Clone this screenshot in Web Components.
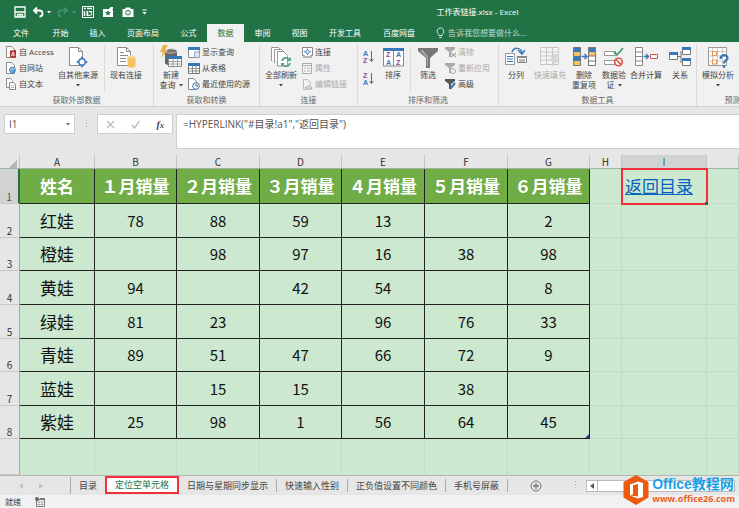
<!DOCTYPE html>
<html lang="zh-CN">
<head>
<meta charset="utf-8">
<title>工作表链接.xlsx - Excel</title>
<style>
html,body{height:100%;margin:0}
body{font:8px/10px "Open Sans","Noto Sans CJK SC",sans-serif;color:#444;overflow:hidden}
</style>
</head>
<body>
<excel-window></excel-window>
<script>
const ICONS = {
save:[12,12,'<path d="M1 1h10v10H1z" fill="none" stroke="#fff" stroke-width="1.3"/><path d="M1 6h10M3.5 11V8.500h5V11" fill="none" stroke="#fff" stroke-width="1.300"/><path d="M5 9h1.500v2H5z" fill="#fff"/>'],
undo:[12,12,'<path d="M2 4.500h5.500c4 0 4 6 0 6M5 1.500 2 4.500l3 3" fill="none" stroke="#fff" stroke-width="1.800"/>'],
redo:[12,12,'<path d="M10 4.500H4.500c-4 0-4 6 0 6M7 1.500l3 3-3 3" fill="none" stroke="#4b946d" stroke-width="1.600"/>'],
caret:[4,3,'<path d="M0 0h4L2 2.500z" fill="currentColor"/>'],
pivot:[12,12,'<path d="M.5.5h11v11H.5z" fill="none" stroke="#fff"/><path d="M2 2.500h2M5 2.500h5M2.500 5v5" stroke="#fff" stroke-width="1.500"/><path d="M4.500 5H10v5H4.500z" fill="#fff"/><path d="m6 5 4 2.500-1.500.5L10 10l-1 .5-1-2-1.500 1z" fill="#217346"/>'],
star:[12,12,'<path d="M1 3h6l1.500-2H11v2h-1l1 1v7H1z" fill="#fff"/><path d="m6 4 .9 1.900 2.100.2-1.600 1.400.5 2.100L6 8.500 4.100 9.600l.5-2.100L3 6.100l2.100-.2z" fill="#217346"/>'],
camera:[12,12,'<path d="M.5 3H3l1-1.500h4L9 3h2.500v8H.5z" fill="#fff"/><circle cx="6" cy="6.700" r="2.300" fill="none" stroke="#217346"/>'],
custom:[5,6,'<path d="M.5 1h4" stroke="#fff"/><path d="M.3 3h4.400L2.500 5.500z" fill="#fff"/>'],
bulb:[9,12,'<path d="M3 8.500C3 7 1.200 6.500 1.200 4.200 1.200 2.200 2.700 1 4.500 1s3.300 1.200 3.300 3.200C7.800 6.500 6 7 6 8.500zM3.200 10.500h2.600" fill="none" stroke="#dbeae2"/>'],
access:[10,12,'<path d="M.5.5h5l3 3v8h-8z" fill="#fff" stroke="#888"/><path d="M4 4.500 10 4v8l-6-.5z" fill="#b5353d"/><path d="M5.500 10 7 6l1.500 4M6 9h2" fill="none" stroke="#fff" stroke-width=".8"/>'],
web:[10,12,'<path d="M.5.5h5l3 3v8h-8z" fill="#fff" stroke="#888"/><circle cx="6.500" cy="8" r="3" fill="#5d9bcf" stroke="#3d78ad" stroke-width=".7"/><path d="M4 8c2-2 3-2 5-1M5 10l3-4" stroke="#d5e9f5" stroke-width=".6" fill="none"/>'],
text:[10,12,'<path d="M3 9.500H.5v-9h4l2 2v1" fill="#fff" stroke="#888"/><path d="M3.500 4.500h4l2 2v5h-6z" fill="#fff" stroke="#888"/><path d="M5 8h3M5 9.500h3" stroke="#999" stroke-width=".6"/>'],
other:[20,22,'<path d="M1.500 1.500h9l4 4v14h-13z" fill="#fff" stroke="#8c8c8c"/><path d="M10.500 1.500v4h4" fill="none" stroke="#8c8c8c"/><circle cx="14" cy="16" r="3.200" fill="#fff" stroke="#3877b9" stroke-width="1.400"/><path d="m14 10 1.500 2.500h-3zM14 22l1.500-2.500h-3zM8 16l2.500-1.500v3zM20 16l-2.500-1.500v3z" fill="#3877b9"/>'],
existing:[20,22,'<path d="M1.500 1.500h9l4 4v14h-13z" fill="#fff" stroke="#8c8c8c"/><path d="M10.500 1.500v4h4M4 6.500h4M4 9.500h8M4 12.500h6M4 15.500h6" fill="none" stroke="#8c8c8c"/><path d="M11.500 11v9c0 2 8 2 8 0v-9" fill="#f3c261"/><ellipse cx="15.500" cy="11" rx="4" ry="1.500" fill="#f8d896"/>'],
query:[24,24,'<path d="M6 6v12c0 3 12 3 12 0V6" fill="#666"/><ellipse cx="12" cy="6" rx="6" ry="2.200" fill="#777" stroke="#ddd" stroke-width=".7"/><path d="M4 0h5L6 5h3L2 13l2-6H1z" fill="#efb04c"/><path d="M9.500 11.500h13v10h-13z" fill="#fff" stroke="#888"/><path d="M9 11h14v3H9z" fill="#3877b9"/><path d="M9.500 16.500h13M9.500 19h13M14 14v7.500M18.500 14v7.500" stroke="#888" stroke-width=".8"/>'],
show:[12,11,'<path d="M.5.5h11v10H.5z" fill="#fff" stroke="#888"/><path d="M0 0h12v3H0z" fill="#3877b9"/><path d="M6.500 5h5v5.500h-5z" fill="#dce7f3" stroke="#8aa6c5"/>'],
grid:[12,11,'<path d="M.5.5h11v10H.5z" fill="#fff" stroke="#777"/><path d="M0 0h12v3H0z" fill="#3877b9"/><path d="M.5 5.500h11M.5 8h11M4.500 3v7.500M8 3v7.500" stroke="#777" stroke-width=".8"/>'],
recent:[12,12,'<path d="M.5.5h5l3 3v8h-8z" fill="#fff" stroke="#888"/><circle cx="8" cy="8" r="3.300" fill="#fff" stroke="#3877b9"/><path d="M8 6v2h2" fill="none" stroke="#555"/>'],
refresh:[22,22,'<path d="M1.500 15V1.500h7l3 3" fill="#fff" stroke="#999"/><path d="M4.500 17V3.500h7l3 3" fill="#fff" stroke="#999"/><path d="M7.500 5.500h6l4 4V20h-10z" fill="#fff" stroke="#999"/><path d="M12 15c1-4 6-4 8-1M20 17c-1 4-6 4-8 1" fill="none" stroke="#5da585" stroke-width="1.800"/><path d="M21 11v4h-4zM11 21v-4h4z" fill="#5da585"/>'],
link:[11,11,'<path d="M2.500 8.500h-2v-8h10v8h-2" fill="#fff" stroke="#888"/><circle cx="5.500" cy="4.800" r="1.700" fill="none" stroke="#3877b9"/><path d="M5.500 1.500v1M5.500 7v1M2 4.800h1M8 4.800h1" stroke="#3877b9"/><path d="M1 10h9" stroke="#777"/>'],
props:[11,11,'<path d="M.5.5h9v10h-9z" fill="#f8f8f8" stroke="#aaa"/><path d="M.5 2.500h9M2 5h2M5 5h3M2 8h2M5 8h3" stroke="#aaa"/>'],
edit:[11,11,'<path d="M1.500 10V.5h4l3 3V6M1.500 10.500H4" fill="none" stroke="#bbb"/><path d="M4 10c0-4 6-4 6 0zM3 8l2 2" fill="#ddd" stroke="#aaa"/>'],
az:[11,13,'<text x="0" y="6" font-size="7" font-weight="600" fill="#3877b9">A</text><text x="0" y="12.500" font-size="7" font-weight="600" fill="#8a4ba2">Z</text><path d="M8.500 1v10M6.500 9l2 2.500 2-2.500" fill="none" stroke="#666"/>'],
za:[11,13,'<text x="0" y="6" font-size="7" font-weight="600" fill="#8a4ba2">Z</text><text x="0" y="12.500" font-size="7" font-weight="600" fill="#3877b9">A</text><path d="M8.500 1v10M6.500 9l2 2.500 2-2.500" fill="none" stroke="#666"/>'],
sort:[21,19,'<path d="M.5.500h20v17.500H.5z" fill="#fff" stroke="#888"/><path d="M0 0h21v3H0z" fill="#3877b9"/><path d="M10.500 3v15" stroke="#888"/><g font-size="7" font-weight="600"><text x="3" y="9" fill="#8a4ba2">Z</text><text x="3" y="17" fill="#3877b9">A</text><text x="13" y="9" fill="#3877b9">A</text><text x="13" y="17" fill="#8a4ba2">Z</text></g>'],
filter:[20,21,'<path d="M0 1h20v3l-8 7v10H8V11L0 4z" fill="#777"/><path d="M2 3h3l5 7v9H9v-8z" fill="#aaa"/>'],
clear:[11,11,'<path d="M0 0h10v2L6 5v5H4V5L0 2z" fill="#aaa"/><path d="m6 6 5 4M11 6l-5 4" stroke="#aaa" stroke-width="1.300"/>'],
reapply:[11,11,'<path d="M0 0h10v2L6 5v5H4V5L0 2z" fill="#aaa"/><circle cx="8" cy="8" r="2.500" fill="#f1f1f1" stroke="#aaa"/>'],
advanced:[11,11,'<path d="M0 0h10v2L6 5v5H4V5L0 2z" fill="#555"/><path d="m5.500 9.500 4.500-5.500" stroke="#3877b9" stroke-width="2"/>'],
split:[22,20,'<path d="M.5 6.500h9v11h-9z" fill="#fff" stroke="#999"/><path d="M2 9.500h6M2 12h6M2 14.500h6" stroke="#3877b9"/><path d="M12.500 9.500h9v6h-9z" fill="#fff" stroke="#888"/><path d="M12 9h10v2H12z" fill="#888"/><path d="M14 12h6v3h-6z" fill="#bbb"/><path d="M7 5c2-5 9-5 10 1M13 3l4 4 3-4" fill="none" stroke="#3877b9" stroke-width="1.500"/>'],
flash:[21,20,'<path d="M.5.5h18v17H.5z" fill="#f4f4f4" stroke="#c7c7c7"/><path d="M.5 5h18M.5 9h18M.5 13h18M6.500.5v17M12.500.5v17" stroke="#c7c7c7"/><path d="M13 7h7l-4 5h4l-8 8 2-6h-4z" fill="#d5d5d5"/>'],
dup:[23,20,'<path d="M.5.5h7v18h-7z" fill="#3877b9" stroke="#777"/><path d="M1 5h6v4H1zM1 14h6v4H1z" fill="#f3c261"/><path d="M15.500.5h7v18h-7z" fill="#fff" stroke="#777"/><path d="M16 1h6v4h-6z" fill="#3877b9"/><path d="M16 5h6v4h-6z" fill="#f3c261"/><path d="M15.500 9h7M15.500 14h7" stroke="#777"/><path d="M8.500 9.500h5M11.500 7l2.500 2.500-2.500 2.500" fill="none" stroke="#3877b9" stroke-width="1.400"/>'],
valid:[20,20,'<path d="M.5 4.500h11v4H.5zM.5 13.500h11v4H.5z" fill="#fff" stroke="#999"/><path d="m10 5 3 3 6-7" fill="none" stroke="#459a70" stroke-width="1.800"/><circle cx="14.500" cy="15" r="3.800" fill="#fff" stroke="#d95245" stroke-width="1.600"/><path d="m12 12.500 5 5" stroke="#d95245" stroke-width="1.600"/>'],
merge:[23,20,'<path d="M.5.500h7v18h-7zM.5 5h7M.5 9.500h7M.5 14h7" fill="#fff" stroke="#888"/><path d="M8.500 9.500h5M11 7l2.500 2.500L11 12" fill="none" stroke="#3877b9" stroke-width="1.400"/><path d="M15.500 7.500h7v4h-7z" fill="#fff" stroke="#d95245"/>'],
relation:[22,20,'<path d="M9 9.500h3V4M9 9.500h3V16" fill="none" stroke="#777"/><path d="M.5 5.500h8v7h-8zM13.500.5h8v7h-8zM13.500 11.500h8v7h-8z" fill="#fff" stroke="#777"/><path d="M0 5h9v3H0zM13 0h9v3h-9zM13 11h9v3h-9z" fill="#3877b9"/>'],
whatif:[21,21,'<path d="M.5.500h18v18H.5z" fill="#fff" stroke="#999"/><path d="M.5 4.500h18M.5 9h18M.5 14h18M4.500.5v18M9.500.5v18M14.500.5v18" stroke="#bbb" stroke-width=".8"/><path d="M4.500 4.500h4v4h-4zM4.500 13h4v4h-4z" fill="#fff" stroke="#e99052"/><path d="M12.500 12c0-5 7-5 7-1 0 3-3.500 2-3.500 5.500" fill="none" stroke="#3877b9" stroke-width="2.200"/><circle cx="16" cy="19.500" r="1.400" fill="#3877b9"/>'],
cross:[9,9,'<path d="m1 1 7 7M8 1 1 8" stroke="#bbb" stroke-width="1.200"/>'],
check:[9,9,'<path d="m1 5 2.500 3L8.500 1" fill="none" stroke="#bbb" stroke-width="1.500"/>'],
dots:[3,9,'<path d="M1.500 0v9" stroke="#aaa" stroke-dasharray="1 2"/>'],
prev:[4,6,'<path d="M4 0v6L0 3z" fill="currentColor"/>'],
next:[4,6,'<path d="M0 0v6l4-3z" fill="currentColor"/>'],
plus:[12,12,'<circle cx="6" cy="6" r="5" fill="none" stroke="#777"/><path d="M3 6h6M6 3v6" stroke="#777" stroke-width="1.300"/>'],
macro:[10,10,'<path d="M1.500 2.500h8v7h-8z" fill="#fff" stroke="#777"/><path d="M1 5h9M1 7.500h9M4 3v7M7 3v7" stroke="#999" stroke-width=".7"/><path d="M5 1h5v2H5z" fill="#777"/><circle cx="2" cy="2" r="2" fill="#666"/>'],
corner:[8,8,'<path d="M8 0v8H0z" fill="#b4b4b4"/>'],
office:[26,30,'<path d="M13 0 25.500 7v15.500L13 30 .5 22.500V7z" fill="#eb5a0d"/><path d="m7 9.500 8-3 5 1.500v14l-5 1.500-8-3 8 1V9l-5 1.200v9L7 20.500z" fill="#fff"/>']
};
const define = (name, html, setup) => {
  const template = document.createElement('template');
  template.innerHTML = html;
  customElements.define(name, class extends HTMLElement {
    constructor(){ super(); this.attachShadow({mode:'open'}).append(template.content.cloneNode(true)); }
    connectedCallback(){ if (setup) setup(this, this.shadowRoot); }
  });
};
define('x-icon','<style>:host{display:inline-flex;flex:none}svg{display:block;font-family:"Liberation Sans",sans-serif}</style><svg aria-hidden="true"></svg>',(host,root)=>{
  const [w,h,body]=ICONS[host.getAttribute('name')], svg=root.querySelector('svg');
  svg.setAttribute('width',w);svg.setAttribute('height',h);svg.setAttribute('viewBox',`0 0 ${w} ${h}`);svg.innerHTML=body;
});
define('title-bar',`<style>
:host{display:grid;grid-template-columns:1fr auto 1fr;align-items:center;height:24px;background:#217346;color:#fff}
nav{display:flex;align-items:center;gap:6px;padding-left:14px}
button{border:0;background:none;padding:0;color:inherit;display:flex;align-items:center;gap:3px}
.extra{margin-left:2px}
.dim{color:#4b946d}h1{font:inherit;margin:0;padding-left:216px}
</style><nav aria-label="快速访问">
<button aria-label="保存"><x-icon name="save"></x-icon></button>
<button aria-label="撤销"><x-icon name="undo"></x-icon><x-icon name="caret"></x-icon></button>
<button aria-label="恢复" class="dim"><x-icon name="redo"></x-icon><x-icon name="caret"></x-icon></button>
<button aria-label="选择"><x-icon name="pivot"></x-icon></button>
<button class="extra" aria-label="收藏"><x-icon name="star"></x-icon></button>
<button class="extra" aria-label="照相机"><x-icon name="camera"></x-icon></button>
<button class="extra" aria-label="自定义"><x-icon name="custom"></x-icon></button>
</nav><h1>工作表链接.xlsx - Excel</h1><span></span>`);
define('ribbon-tabs',`<style>
:host{display:flex;height:18px;background:#217346;color:#fff}
button{border:0;background:none;color:inherit;font:inherit;padding:0;width:37px;flex:none}
.file{width:42px}.wide{width:54px}
[aria-selected=true]{background:#f1f1f1;color:#217346}
label{display:flex;align-items:center;gap:3px;padding-left:10px;flex:1}
input{border:0;background:none;font:inherit;color:inherit;padding:0;outline:0;width:100px}
input::placeholder{color:#c5dccf;opacity:1}
</style><button class="file">文件</button><button>开始</button><button>插入</button><button class="wide">页面布局</button><button>公式</button><button role="tab" aria-selected="true">数据</button><button>审阅</button><button>视图</button><button class="wide">开发工具</button><button class="wide">百度网盘</button>
<label><x-icon name="bulb"></x-icon><input aria-label="告诉我" placeholder="告诉我您想要做什么..."></label>`);
define('ribbon-group',`<style>
:host{display:flex;flex-direction:column;flex:none;box-sizing:border-box;border-right:1px solid #dadada;height:62px}
.body{display:flex;height:51px}h2{font:inherit;color:#666;margin:0;text-align:center}
</style><div class="body"><slot></slot></div><h2></h2>`,(h,r)=>r.querySelector('h2').textContent=h.getAttribute('label'));
define('big-button',`<style>
:host{display:block;flex:none}
button{border:0;background:none;font:inherit;color:inherit;padding:0;width:100%;display:flex;flex-direction:column;align-items:center;white-space:nowrap}
.pic{height:26px;display:flex;align-items:center}
.line{height:10px;display:flex;align-items:center;gap:3px}:host([disabled]){color:#aaa}
</style><button><span class="pic"></span><slot></slot></button>`,(h,r)=>{
  r.querySelector('.pic').innerHTML=`<x-icon name="${h.getAttribute('icon')}"></x-icon>`;
  const b=r.querySelector('button');b.disabled=h.hasAttribute('disabled');
  const second=h.getAttribute('second')||'', menu=h.hasAttribute('menu')?'<x-icon name="caret"></x-icon>':'';
  if(second||menu)b.insertAdjacentHTML('beforeend',`<span class="line">${second}${menu}</span>`);
});
define('small-button',`<style>
:host{display:block;height:16px}button{border:0;background:none;font:inherit;color:inherit;padding:0;display:flex;align-items:center;gap:2px;height:16px;white-space:nowrap}
.pic{display:flex;min-width:11px}:host([disabled]){color:#aaa}
</style><button><span class="pic"></span><slot></slot></button>`,(h,r)=>{
  r.querySelector('.pic').innerHTML=`<x-icon name="${h.getAttribute('icon')}"></x-icon>`;
  r.querySelector('button').disabled=h.hasAttribute('disabled');
});
define('data-ribbon',`<style>
:host{display:flex;height:65px;padding-top:2px;box-sizing:border-box;background:#f1f1f1;border-bottom:1px solid #d2d2d2;overflow:hidden}
hr{width:1px;border:0;background:#dadada;margin:2px 0;height:45px;flex:none}
.list{flex:none}.first{padding-left:6px;width:52px;box-sizing:border-box}
.g1{width:154px}.g2{width:106px}.g3{width:98px}.g4{width:141px}.g5{width:198px}.g6{width:72px}
.w26{width:26px}.w30{width:30px}.w34{width:34px}.w38{width:38px}.w42{width:42px}.w52{width:52px}
.order{display:flex;flex-direction:column;gap:9px;padding:6px 2px 0 5px}
.order button{border:0;padding:0;background:none;display:flex}
</style>
<ribbon-group class="g1" label="获取外部数据"><div class="list first"><small-button icon="access">自 Access</small-button><small-button icon="web">自网站</small-button><small-button icon="text">自文本</small-button></div><big-button class="w52" icon="other" menu>自其他来源</big-button><hr><big-button class="w42" icon="existing">现有连接</big-button></ribbon-group>
<ribbon-group class="g2" label="获取和转换"><big-button class="w34" icon="query" second="查询" menu>新建</big-button><div class="list"><small-button icon="show">显示查询</small-button><small-button icon="grid">从表格</small-button><small-button icon="recent">最近使用的源</small-button></div></ribbon-group>
<ribbon-group class="g3" label="连接"><big-button class="w42" icon="refresh" menu>全部刷新</big-button><div class="list"><small-button icon="link">连接</small-button><small-button icon="props" disabled>属性</small-button><small-button icon="edit" disabled>编辑链接</small-button></div></ribbon-group>
<ribbon-group class="g4" label="排序和筛选"><div class="order"><button aria-label="升序"><x-icon name="az"></x-icon></button><button aria-label="降序"><x-icon name="za"></x-icon></button></div><big-button class="w34" icon="sort">排序</big-button><hr><big-button class="w34" icon="filter">筛选</big-button><div class="list"><small-button icon="clear" disabled>清除</small-button><small-button icon="reapply" disabled>重新应用</small-button><small-button icon="advanced">高级</small-button></div></ribbon-group>
<ribbon-group class="g5" label="数据工具"><big-button class="w34" icon="split">分列</big-button><big-button class="w34" icon="flash" disabled>快速填充</big-button><big-button class="w34" icon="dup" second="重复项">删除</big-button><big-button class="w26" icon="valid" second="证" menu>数据验</big-button><big-button class="w38" icon="merge">合并计算</big-button><big-button class="w30" icon="relation">关系</big-button></ribbon-group>
<ribbon-group class="g6" label="预测"><big-button class="w42" icon="whatif" menu>模拟分析</big-button></ribbon-group>`);
define('formula-bar',`<style>
:host{display:flex;align-items:flex-start;height:48px;box-sizing:border-box;padding:7px 0 6px 4px;background:#e6e6e6}
.box{display:flex;align-items:center;background:#fff;border:1px solid #d0d0d0;height:20px;box-sizing:border-box}
.name{width:71px;padding:0 4px}.tools{width:76px;justify-content:space-around}
.gap{width:22px;height:20px;display:flex;align-items:center;justify-content:center}
input,textarea{border:0;outline:0;background:none;font-family:inherit;color:#555;padding:0;font-size:10px;line-height:14px;min-width:0}
input{flex:1}.formula{flex:1;height:35px;align-items:flex-start;margin-left:3px;padding:2px 6px;border-right:0}
textarea{resize:none;overflow:hidden;width:100%;height:28px}
button{border:0;background:none;padding:0;display:flex;color:#666}
i{font:italic bold 10px "Liberation Serif",serif;color:#444}sub{font-size:8px;vertical-align:baseline}
</style><div class="box name"><input aria-label="名称框" value="I1"><button aria-label="名称列表"><x-icon name="caret"></x-icon></button></div><span class="gap"><x-icon name="dots"></x-icon></span>
<div class="box tools"><button aria-label="取消"><x-icon name="cross"></x-icon></button><button aria-label="输入"><x-icon name="check"></x-icon></button><button aria-label="插入函数"><i>f<sub>x</sub></i></button></div>
<div class="box formula"><textarea aria-label="编辑栏">=HYPERLINK("#目录!a1","返回目录")</textarea></div>`);
define('sheet-grid',`<style>
:host{display:block;flex:1;min-height:0;overflow:hidden;background:#cce8cf}
table{table-layout:fixed;border-collapse:separate;border-spacing:0;width:100%;height:100%;font-family:"Noto Sans CJK SC",sans-serif;color:#111}
th,td{padding:0;box-sizing:border-box;border-right:1px solid #c5d8cf;border-bottom:1px solid #c5d8cf;text-align:center;font-weight:400}
thead th{height:14px;background:#e6e6e6;border-color:#c4c4c4;border-bottom-color:#9fb5a5;font-size:10px;line-height:12px;color:#333}
thead th.on,tbody th.on{background:#d2d2d2;color:#217346}thead th:first-child{text-align:right;padding-right:2px}thead x-icon{vertical-align:bottom}
tbody th{background:#e6e6e6;border-color:#c8c8c8;border-right-color:#9eaaa1;vertical-align:bottom;font-size:10px;line-height:13px;color:#333}
tbody th.on{border-right:2px solid #217346}
td.d{font-size:15px;line-height:20px;border-color:#222}td.n{font-size:17px}
td.h{font-size:17px;line-height:20px;font-weight:700;color:#fff;background:#70ad47}
td.last{position:relative}td.last::after{content:"";position:absolute;right:0;bottom:0;border:2px solid;border-color:transparent #27408b #27408b transparent}
td.sel{position:relative;text-align:left;padding-left:3px;font-size:17px;line-height:20px;outline:2px solid #f2303a;outline-offset:-1px}
td.sel::after{content:"";position:absolute;right:-2px;bottom:-2px;width:3px;height:3px;background:#217346}
td.b{border-bottom:0}a{color:#0563c1}
</style><table><colgroup></colgroup><thead><tr></tr></thead><tbody></tbody></table>`,(host,root)=>{
  const cols=[20,75,82,83,82,83,83,82,32,85];
  root.querySelector('colgroup').innerHTML=cols.map(w=>`<col style="width:${w}px">`).join('')+'<col>';
  root.querySelector('thead tr').innerHTML='<th><x-icon name="corner"></x-icon></th>'+[...'ABCDEFGHI'].map(c=>`<th class="${c==='I'?'on':''}">${c}</th>`).join('')+'<th></th>';
  const rows=[['姓名','１月销量','２月销量','３月销量','４月销量','５月销量','６月销量'],
    ['红娃',78,88,59,13,'',2],['橙娃','',98,97,16,38,98],['黄娃',94,'',42,54,'',8],['绿娃',81,23,'',96,76,33],
    ['青娃',89,51,47,66,72,9],['蓝娃','',15,15,'',38,''],['紫娃',25,98,1,56,64,45]];
  const heights=[35,34,33,34,34,33,34,33];
  root.querySelector('tbody').innerHTML=rows.map((r,i)=>`<tr style="height:${heights[i]}px"><th class="${i?'':'on'}">${i+1}</th>`+
    r.map((v,j)=>`<td class="d ${i?'':'h'} ${j?'':'n'} ${i===7&&j===6?'last':''}">${v}</td>`).join('')+
    `<td></td><td class="${i?'':'sel'}">${i?'':'<a href="#catalog">返回目录</a>'}</td><td></td></tr>`).join('')+
    '<tr><th></th>'+'<td class="b"></td>'.repeat(10)+'</tr>';
});
define('sheet-tabs',`<style>
:host{display:flex;align-items:center;height:20px;box-sizing:border-box;background:#e6e6e6;border-top:1px solid #b5b5b5;padding-right:4px}
button{border:0;background:none;font:inherit;color:inherit;padding:0;display:flex;align-items:center;justify-content:center}
.nav{width:70px;display:flex;gap:16px;color:#c0c0c0;box-sizing:border-box;padding-left:19px}
[role=tablist]{display:flex;align-items:center;border-left:1px solid #aaa;font-size:9px;line-height:12px}
[role=tab]{border-right:1px solid #aaa;padding:0 8px;height:13px;white-space:nowrap}
[role=tab].before{border:0}
[aria-selected=true]{background:#fff;color:#217346;border:2px solid #f2303a;height:18px;padding:0 8px;margin-top:-1px}
.add{margin-left:22px}.grip{margin-left:32px}
.scroll{flex:1;display:flex;margin-left:9px;height:10px;border:1px solid #bbb;background:#fff}
.scroll button{width:11px;border-right:1px solid #bbb;color:#555}
</style><span class="nav"><button aria-label="上一张"><x-icon name="prev"></x-icon></button><button aria-label="下一张"><x-icon name="next"></x-icon></button></span>
<div role="tablist"><button role="tab" class="before">目录</button><button role="tab" aria-selected="true">定位空单元格</button><button role="tab">日期与星期同步显示</button><button role="tab">快速输入性别</button><button role="tab">正负值设置不同颜色</button><button role="tab">手机号屏蔽</button></div>
<button class="add" aria-label="新工作表"><x-icon name="plus"></x-icon></button><x-icon class="grip" name="dots"></x-icon><div class="scroll"><button aria-label="向左滚动"><x-icon name="prev"></x-icon></button></div>`);
define('status-bar',`<style>:host{display:flex;align-items:center;gap:14px;height:13px;background:#f1f1f1;padding-left:5px}</style><span>就绪</span><x-icon name="macro"></x-icon>`);
define('office-mark',`<style>:host{display:flex;align-items:center;gap:3px;font-weight:700;white-space:nowrap}
div{display:flex;flex-direction:column}b{font:bold 14px/17px "Liberation Sans","Noto Sans CJK SC",sans-serif;color:#1ba1e8}span{font-size:9px;line-height:12px;color:#e8631c}
</style><x-icon name="office"></x-icon><div><b>Office教程网</b><span>www.office26.com</span></div>`);
define('excel-window',`<style>
:host{display:flex;flex-direction:column;height:100vh;position:relative;overflow:hidden}
office-mark{position:absolute;right:4px;bottom:3px}
</style><title-bar></title-bar><ribbon-tabs></ribbon-tabs><data-ribbon></data-ribbon><formula-bar></formula-bar><sheet-grid></sheet-grid><sheet-tabs></sheet-tabs><status-bar></status-bar><office-mark></office-mark>`);
</script>
</body>
</html>
